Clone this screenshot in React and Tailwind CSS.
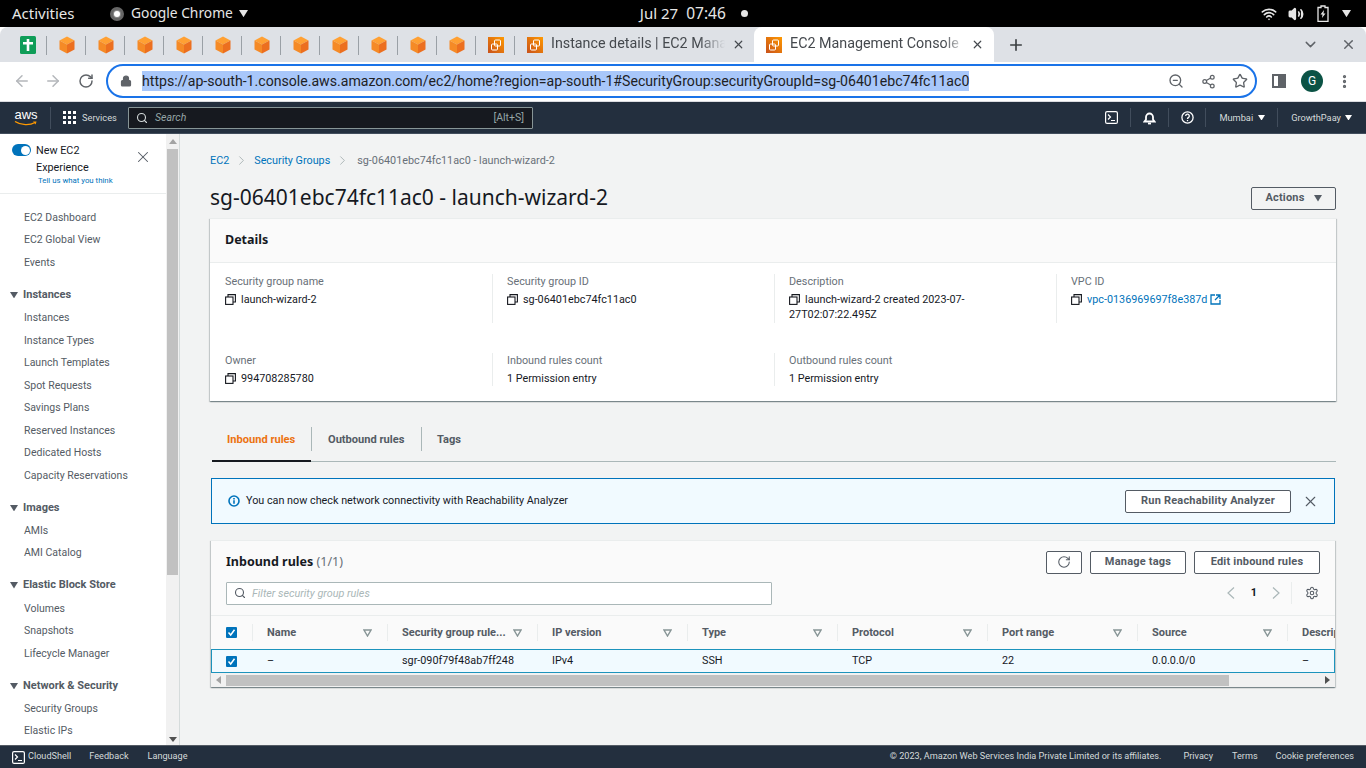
import React from 'react';
import { ArrowLeft, ArrowRight, RotateCw, Lock, ZoomOut, Share2, Star, X, Plus, ChevronDown, ChevronRight, Search, Settings, Wifi, Volume2, EllipsisVertical } from 'lucide-react';

const Cube = () => (
  <svg width="16" height="18" viewBox="0 0 16 18">
    <path d="M8 0.5 15.5 4.5 8 8.5 0.5 4.5Z" fill="#ffa033" />
    <path d="M0.5 4.5 8 8.5V17.5L0.5 13.5Z" fill="#f58a26" />
    <path d="M15.5 4.5 8 8.5V17.5L15.5 13.5Z" fill="#ec6f1f" />
  </svg>
);
const Sheet = () => (
  <svg width="16" height="18" viewBox="0 0 16 18">
    <rect width="16" height="18" rx="1.5" fill="#0f9d58" />
    <path d="M6.7 3h2.6v3h3.7v2.4H9.3V15H6.7V8.4H3V6h3.7Z" fill="#fff" />
  </svg>
);
const Ec2 = () => (
  <svg width="16" height="16" viewBox="0 0 16 16">
    <defs><linearGradient id="e" x1="0" y1="1" x2="1" y2="0"><stop offset="0" stopColor="#c8511b" /><stop offset="1" stopColor="#ff9900" /></linearGradient></defs>
    <rect width="16" height="16" fill="url(#e)" />
    <rect x="6.5" y="3" width="6" height="6" rx="1" fill="none" stroke="#fff" strokeWidth="1" />
    <rect x="3.5" y="7" width="6" height="6" rx="1" fill="none" stroke="#fff" strokeWidth="1" />
  </svg>
);
const CopyIc = () => (
  <svg width="11" height="11" viewBox="0 0 11 11" fill="none" stroke="#16191f" strokeWidth="1.1" className="shrink-0">
    <rect x="0.6" y="3" width="7.4" height="7.4" />
    <path d="M3 3V0.6h7.4V8H8" />
  </svg>
);
const Tri = ({ c = '#fff', s = 8 }) => (
  <svg width={s} height={s * 0.8} viewBox="0 0 10 8" className="shrink-0"><path d="M0 0h10L5 8Z" fill={c} /></svg>
);
const FilterTri = () => (
  <svg width="9" height="8" viewBox="0 0 9 8" fill="none" stroke="#879596" strokeWidth="1.4" className="shrink-0"><path d="M1 1h7L4.5 7Z" /></svg>
);
const Check = () => (
  <span className="w-[11px] h-[11px] bg-[#0073bb] rounded-[1px] flex items-center justify-center shrink-0">
    <svg width="9" height="9" viewBox="0 0 9 9" fill="none" stroke="#fff" strokeWidth="1.5"><path d="M1.5 4.5 3.7 7 7.5 1.8" /></svg>
  </span>
);
const ShellIc = () => (
  <svg width="13" height="13" viewBox="0 0 13 13" fill="none" stroke="#fff" strokeWidth="1.2">
    <rect x="0.6" y="0.6" width="11.8" height="11.8" rx="1.5" />
    <path d="M3 3.5 5.5 6 3 8.5M6 9.5h4" />
  </svg>
);
const Sep = () => <span className="block w-px h-[19px] bg-[#414d5c] shrink-0" />;

const sideGroups = [
  { items: ['EC2 Dashboard', 'EC2 Global View', 'Events'] },
  { h: 'Instances', items: ['Instances', 'Instance Types', 'Launch Templates', 'Spot Requests', 'Savings Plans', 'Reserved Instances', 'Dedicated Hosts', 'Capacity Reservations'] },
  { h: 'Images', items: ['AMIs', 'AMI Catalog'] },
  { h: 'Elastic Block Store', items: ['Volumes', 'Snapshots', 'Lifecycle Manager'] },
  { h: 'Network & Security', items: ['Security Groups', 'Elastic IPs'] },
];

const columns = [
  ['Name', 'w-[135px]', '–'],
  ['Security group rule...', 'w-[150px]', 'sgr-090f79f48ab7ff248'],
  ['IP version', 'w-[150px]', 'IPv4'],
  ['Type', 'w-[150px]', 'SSH'],
  ['Protocol', 'w-[150px]', 'TCP'],
  ['Port range', 'w-[150px]', '22'],
  ['Source', 'w-[150px]', '0.0.0.0/0'],
  ['Description', 'w-[100px]', '–'],
];

const Field = ({ label, first, h, children }) => (
  <div className={`${h} ${first ? 'pl-[15px]' : 'pl-[14px] border-l border-[#eaeded]'}`}>
    <div className="text-[#687078] leading-[14px] pt-px">{label}</div>
    <div className="text-[#16191f] leading-[15px] mt-[3px]">{children}</div>
  </div>
);

const Btn = ({ children, className = '' }) => (
  <div className={`h-[23px] border border-[#545b64] rounded-[2px] bg-white flex items-center justify-center text-[#545b64] font-bold text-[11px] tracking-[0.2px] ${className}`}>{children}</div>
);

export default function App() {
  return (
    <div className="h-screen w-[1366px] overflow-hidden flex flex-col font-['Roboto',sans-serif] text-[10.8px]">
      {/* GNOME bar */}
      <div className="h-[27px] bg-black text-[#e6e6e6] flex items-center text-[15px] font-['Noto_Sans',sans-serif] shrink-0">
        <span className="ml-3 w-[63px] whitespace-nowrap">Activities</span>
        <span className="ml-[35px] w-3.5 h-3.5 rounded-full bg-[#8b8b8b] border-[3px] border-[#666] flex items-center justify-center"><span className="w-1.5 h-1.5 rounded-full bg-white" /></span>
        <span className="ml-[7px] text-[13.8px]">Google Chrome</span>
        <span className="ml-[6px]"><Tri c="#e6e6e6" s={9} /></span>
        <span className="ml-[392px]">Jul 27</span>
        <span className="ml-[8px] text-[15.5px]">07:46</span>
        <span className="ml-[15px] w-[7px] h-[7px] rounded-full bg-[#e6e6e6]" />
        <div className="ml-auto flex items-center mr-[15px]">
          <Wifi size={16} strokeWidth={2.4} />
          <Volume2 size={16} strokeWidth={2.4} fill="#e6e6e6" className="ml-[11px]" />
          <svg width="12" height="17" viewBox="0 0 12 17" className="ml-[13px]" fill="none" stroke="#e6e6e6" strokeWidth="1.3"><path d="M4 1h4v1.5h3v13.8H1V2.5h3Z" /><path d="M7 5 3.5 9.5h2L5 13l3.5-4.5h-2Z" fill="#e6e6e6" stroke="none" /></svg>
          <span className="ml-[13px]"><Tri c="#e6e6e6" s={9} /></span>
        </div>
      </div>

      {/* Tab strip */}
      <div className="h-[35px] bg-[#dee1e6] flex items-center pl-2 shrink-0 text-[#45494e] text-[14.3px] rounded-t-[8px]">
        {[Sheet, ...Array(11).fill(Cube), Ec2].map((I, i) => (
          <div key={i} className="w-[39px] h-full flex items-center justify-center relative">
            <I />
            <span className="absolute right-0 top-[9px] w-px h-[19px] bg-[#9aa0a6]" />
          </div>
        ))}
        <div className="w-[239px] h-full flex items-center pl-3">
          <Ec2 />
          <span className="ml-2 w-[174px] pb-[2px] overflow-hidden whitespace-nowrap [mask-image:linear-gradient(to_right,black_85%,transparent)]">Instance details | EC2 Management</span>
          <X size={13} strokeWidth={2.2} className="ml-[7px]" />
        </div>
        <div className="w-[240px] h-[35px] bg-white rounded-t-[8px] flex items-center pl-3">
          <Ec2 />
          <span className="ml-[8px] w-[175px] pb-[2px] overflow-hidden whitespace-nowrap [mask-image:linear-gradient(to_right,black_88%,transparent)]">EC2 Management Console</span>
          <X size={13} strokeWidth={2.2} className="ml-[6px]" />
        </div>
        <Plus size={18} strokeWidth={2.2} className="ml-[13px] text-[#3c4043]" />
        <ChevronDown size={17} strokeWidth={2} className="ml-auto text-[#5f6368]" />
        <X size={15} strokeWidth={2.2} className="ml-[22px] mr-[10px] text-[#5f6368]" />
      </div>

      {/* Toolbar */}
      <div className="h-[40px] bg-white flex items-center pb-[1px] shrink-0 text-[#5f6368] border-b border-[#dadce0]">
        <ArrowLeft size={18} strokeWidth={2} className="ml-[13px] text-[#b4b7bb]" />
        <ArrowRight size={18} strokeWidth={2} className="ml-[13px] text-[#b4b7bb]" />
        <RotateCw size={16} strokeWidth={2.2} className="ml-[16px]" />
        <div className="ml-[12px] w-[1151px] h-[34px] border-[2.5px] border-[#1a73e8] rounded-full flex items-center">
          <Lock size={12} strokeWidth={2.4} fill="#5f6368" className="ml-3 shrink-0" />
          <span className="ml-[10px] bg-[#a8c7fa] text-[#202124] text-[14.12px] leading-[20px] whitespace-nowrap">https://ap-south-1.console.aws.amazon.com/ec2/home?region=ap-south-1#SecurityGroup:securityGroupId=sg-06401ebc74fc11ac0</span>
          <ZoomOut size={16} strokeWidth={2} className="ml-auto" />
          <Share2 size={15} strokeWidth={2} className="ml-[17px]" />
          <Star size={16} strokeWidth={2} className="ml-[16px] mr-[7px]" />
        </div>
        <span className="ml-[15px] w-[14px] h-[14px] border-2 border-[#5f6368] flex justify-end"><span className="w-[6px] h-full bg-[#5f6368]" /></span>
        <span className="ml-[15px] w-[22px] h-[22px] rounded-full bg-[#0b5345] text-white text-[12px] flex items-center justify-center">G</span>
        <EllipsisVertical size={17} strokeWidth={2.6} className="ml-[13px]" />
      </div>

      {/* AWS nav */}
      <div className="h-[32px] bg-[#232f3e] border-b border-[#414d5c] flex items-center text-[#d5dbdb] text-[9.25px] shrink-0">
        <div className="ml-[14px] w-[24px] flex flex-col items-center text-white">
          <span className="text-[13px] leading-[12px] font-['Liberation_Sans',sans-serif]">aws</span>
          <svg width="24" height="5" viewBox="0 0 24 5" fill="none"><path d="M1 0.5C7 4.5 16 4.5 21 1.5" stroke="#ff9900" strokeWidth="1.3" /><path d="M19 .6 22.5 .4 21.6 3.6" fill="#ff9900" /></svg>
        </div>
        <span className="ml-3 w-px h-[22px] bg-[#414d5c]" />
        <svg width="13" height="13" viewBox="0 0 13 13" fill="#fff" className="ml-[12px]">
          {[0, 5, 10].flatMap((y) => [0, 5, 10].map((x) => <rect key={`${x}${y}`} x={x} y={y} width="3" height="3" />))}
        </svg>
        <span className="ml-[6px] w-[46px]">Services</span>
        <div className="w-[405px] h-[22px] border border-[#879596] rounded-[1px] bg-[#16191f] flex items-center px-[7px]">
          <Search size={12} strokeWidth={2.2} className="text-[#d5dbdb]" />
          <span className="ml-[7px] italic text-[#95a5a6] text-[10.5px]">Search</span>
          <span className="ml-auto text-[#95a5a6] text-[10.5px] mr-px">[Alt+S]</span>
        </div>
        <div className="ml-auto flex items-center">
          <ShellIc />
          <span className="ml-[12px]"><Sep /></span>
          <svg width="13" height="14" viewBox="0 0 13 14" fill="none" stroke="#fff" strokeWidth="1.8" className="ml-[12px]"><path d="M1.5 10.5h10L10 8.5V6a3.5 3.5 0 0 0-7 0v2.5Z" /><path d="M5 12.5h3" /></svg>
          <span className="ml-[12px]"><Sep /></span>
          <svg width="13" height="13" viewBox="0 0 13 13" fill="none" stroke="#fff" strokeWidth="1.3" className="ml-[12px]"><circle cx="6.5" cy="6.5" r="5.6" /><path d="M4.7 5a1.8 1.8 0 1 1 2.6 1.6c-.6.4-.8.7-.8 1.4" /><path d="M6.5 9v1.2" /></svg>
          <span className="ml-[11px]"><Sep /></span>
          <span className="ml-[13px]">Mumbai</span>
          <span className="ml-[5px]"><Tri s={7} /></span>
          <span className="ml-[12px]"><Sep /></span>
          <span className="ml-[13px]">GrowthPaay</span>
          <span className="ml-[4px] mr-[14px]"><Tri s={7} /></span>
        </div>
      </div>

      {/* Main */}
      <div className="flex-1 min-h-0 flex">
        <aside className="w-[166px] shrink-0 bg-white flex flex-col overflow-hidden">
          <div className="h-[60px] border-b border-[#eaeded] pt-[9px] shrink-0">
            <div className="flex">
              <span className="ml-3 mt-[1px] w-[19px] h-[12px] rounded-full bg-[#0073bb] flex items-center justify-end pr-[1.5px]"><span className="w-[9px] h-[9px] rounded-full bg-white" /></span>
              <div className="ml-[5px] text-[#16191f] leading-[16.5px] w-[70px]">New EC2 Experience</div>
              <X size={18} strokeWidth={1.4} className="ml-[28px] mt-[5px] text-[#545b64]" />
            </div>
            <div className="ml-[38px] text-[#0073bb] text-[7.8px] leading-[10px]">Tell us what you think</div>
          </div>
          <nav className="pt-[12.5px] text-[#545b64] text-[10.5px]">
            {sideGroups.map((g, i) => (
              <div key={i}>
                {g.h && (
                  <div className="mt-[10.25px] h-[22.5px] flex items-center pl-[10px] pb-[1px] font-bold text-[11px] gap-[5px]"><Tri c="#545b64" s={8} />{g.h}</div>
                )}
                {g.items.map((t) => <div key={t} className="h-[22.5px] flex items-center pl-[24px]">{t}</div>)}
              </div>
            ))}
          </nav>
        </aside>
        <div className="w-[14px] shrink-0 bg-[#f1f1f1] border-r border-[#d5dbdb] flex flex-col items-center">
          <svg width="8" height="5" viewBox="0 0 8 5" className="mt-[5px] mb-[5px]"><path d="M0 5h8L4 0Z" fill="#a3a3a3" /></svg>
          <div className="w-[11px] h-[426px] bg-[#c1c1c1]" />
          <svg width="8" height="5" viewBox="0 0 8 5" className="mt-auto mb-[3px]"><path d="M0 0h8L4 5Z" fill="#505050" /></svg>
        </div>

        <main className="flex-1 bg-[#f2f3f3] pl-[30px] pr-[30px] min-w-0">
          <div className="h-[47px] pt-[19px] flex items-start text-[#687078] leading-[14px]">
            <span className="text-[#0073bb] pt-px">EC2</span>
            <ChevronRight size={15} strokeWidth={1} className="mx-[5px] text-[#879596]" />
            <span className="text-[#0073bb] pt-px">Security Groups</span>
            <ChevronRight size={15} strokeWidth={1} className="ml-[5px] mr-[7px] text-[#879596]" />
            <span className="pt-px">sg-06401ebc74fc11ac0 - launch-wizard-2</span>
          </div>
          <div className="h-[32px] flex items-center justify-between">
            <h1 className="text-[21px] text-[#16191f] leading-[26px] font-['Noto_Sans',sans-serif]">sg-06401ebc74fc11ac0 - launch-wizard-2</h1>
            <Btn className="w-[85px] gap-[9px] !bg-transparent mt-[3px]"><span>Actions</span><Tri c="#545b64" s={8} /></Btn>
          </div>

          {/* Details */}
          <section className="mt-[5px] h-[183px] bg-white border-t border-[#eaeded] shadow-[0_1px_1px_0_rgba(0,28,36,0.3),1px_1px_1px_0_rgba(0,28,36,0.15),-1px_1px_1px_0_rgba(0,28,36,0.15)]">
            <div className="h-[44px] bg-[#fafafa] border-b border-[#eaeded] pl-[15px] pb-px flex items-center text-[#16191f] font-bold text-[12.5px] font-['Noto_Sans',sans-serif]">Details</div>
            <div className="mt-[11px] grid grid-cols-[282px_282px_282px_280px] gap-y-[30px]">
              <Field first h="h-[49px]" label="Security group name"><span className="flex items-center gap-[5px]"><CopyIc />launch-wizard-2</span></Field>
              <Field h="h-[49px]" label="Security group ID"><span className="flex items-center gap-[5px]"><CopyIc />sg-06401ebc74fc11ac0</span></Field>
              <Field h="h-[49px]" label="Description">
                <span className="flex items-center gap-[5px]"><CopyIc />launch-wizard-2 created 2023-07-</span>
                <span>27T02:07:22.495Z</span>
              </Field>
              <Field h="h-[49px]" label="VPC ID">
                <span className="flex items-center gap-[5px]"><CopyIc /><span className="text-[#0073bb]">vpc-0136969697f8e387d</span>
                  <svg width="11" height="11" viewBox="0 0 11 11" fill="none" stroke="#0073bb" strokeWidth="1.3" className="-ml-[2px]"><path d="M5 1H1v9h9V6M6 1h4v4M10 1 5 6" /></svg>
                </span>
              </Field>
              <Field first h="h-[33px]" label="Owner"><span className="flex items-center gap-[5px]"><CopyIc />994708285780</span></Field>
              <Field h="h-[33px]" label="Inbound rules count">1 Permission entry</Field>
              <Field h="h-[33px]" label="Outbound rules count">1 Permission entry</Field>
            </div>
          </section>

          {/* Tabs */}
          <div className="mt-[16px] ml-[2px] h-[45px] border-b border-[#aab7b8] flex font-bold text-[11.1px] text-[#545b64]">
            <div className="w-[99px] h-[45px] border-b-2 border-[#16191f] flex items-start pt-[16px] pl-[15px] text-[#ec7211] leading-[14px]">Inbound rules</div>
            <div className="mt-[10px] h-[24px] w-[110px] border-l border-[#aab7b8] pl-4 pt-[2px] flex items-center">Outbound rules</div>
            <div className="mt-[10px] h-[24px] border-l border-[#aab7b8] pl-[15px] pt-[2px] flex items-center">Tags</div>
          </div>

          {/* Alert */}
          <div className="mt-[16px] mx-px h-[46px] border border-[#0073bb] bg-[#f1faff] flex items-center pl-4 pr-[16px] text-[#16191f]">
            <svg width="12" height="12" viewBox="0 0 12 12" fill="none" className="shrink-0"><circle cx="6" cy="6" r="5" stroke="#0073bb" strokeWidth="1.6" /><path d="M6 3v1.4M6 5.3v3.4" stroke="#0073bb" strokeWidth="1.6" /></svg>
            <span className="ml-[6px]">You can now check network connectivity with Reachability Analyzer</span>
            <Btn className="ml-auto w-[166px]">Run Reachability Analyzer</Btn>
            <X size={17} strokeWidth={1.5} className="ml-[11px] -mr-px text-[#545b64]" />
          </div>

          {/* Table card */}
          <section className="mt-[16px] h-[147px] bg-[#fafafa] border-t border-[#eaeded] shadow-[0_1px_1px_0_rgba(0,28,36,0.3),1px_1px_1px_0_rgba(0,28,36,0.15),-1px_1px_1px_0_rgba(0,28,36,0.15)] flex flex-col overflow-hidden mx-px">
            <div className="h-[75px] shrink-0 pl-[15px] pr-[15px] pt-[9px] border-b border-[#eaeded]">
              <div className="flex items-center h-[24px]">
                <span className="font-bold text-[12.5px] text-[#16191f] font-['Noto_Sans',sans-serif]">Inbound rules <span className="font-normal text-[#687078]">(1/1)</span></span>
                <Btn className="ml-auto w-[36px]"><RotateCw size={14} strokeWidth={1.8} /></Btn>
                <Btn className="ml-[8px] w-[96px]">Manage tags</Btn>
                <Btn className="ml-[8px] w-[126px]">Edit inbound rules</Btn>
              </div>
              <div className="flex items-center mt-[7px] h-[24px]">
                <div className="w-[546px] h-[23px] border border-[#aab7b8] rounded-[1px] bg-white flex items-center pl-[7px]">
                  <Search size={12} strokeWidth={2.2} className="text-[#545b64]" />
                  <span className="ml-[6px] pt-[2px] italic text-[#aab7b8]">Filter security group rules</span>
                </div>
                <svg width="8" height="12" viewBox="0 0 8 12" fill="none" stroke="#aab7b8" strokeWidth="1.2" className="ml-auto"><path d="M7 .5 1 6l6 5.5" /></svg>
                <span className="ml-[16px] font-bold text-[#16191f]">1</span>
                <svg width="8" height="12" viewBox="0 0 8 12" fill="none" stroke="#aab7b8" strokeWidth="1.2" className="ml-[15px]"><path d="M1 .5 7 6l-6 5.5" /></svg>
                <span className="ml-[11px] w-px h-[22px] bg-[#eaeded]" />
                <Settings size={14} strokeWidth={1.8} className="ml-[13px] mr-px text-[#545b64]" />
              </div>
            </div>
            <div className="h-[33px] shrink-0 flex items-center font-bold text-[11px] text-[#545b64] overflow-hidden">
              <div className="w-[41px] shrink-0 pl-[15px]"><Check /></div>
              {columns.map(([h, w], i) => (
                <div key={h} className={`${w} shrink-0 h-[17px] border-l border-[#eaeded] flex items-center pl-[14px] pr-[15px] whitespace-nowrap`}>
                  <span className={`pt-[2px] ${i < 7 ? 'flex-1' : ''}`}>{h}</span>
                  {i < 7 && <FilterTri />}
                </div>
              ))}
            </div>
            <div className="h-[24px] shrink-0 flex items-center bg-[#f1faff] border border-[#1c93bc] text-[#16191f] overflow-hidden">
              <div className="w-[41px] shrink-0 pl-[14px]"><Check /></div>
              {columns.map(([h, w, v]) => (
                <div key={h} className={`${w} shrink-0 pl-[14px] whitespace-nowrap`}>{v}</div>
              ))}
            </div>
            <div className="h-[14px] shrink-0 bg-[#f1f1f1] flex items-center">
              <svg width="5" height="8" viewBox="0 0 5 8" className="ml-[5px]"><path d="M5 0v8L0 4Z" fill="#a3a3a3" /></svg>
              <div className="ml-[5px] w-[1003px] h-[11px] bg-[#c1c1c1]" />
              <svg width="5" height="8" viewBox="0 0 5 8" className="ml-auto mr-[5px]"><path d="M0 0v8l5-4Z" fill="#505050" /></svg>
            </div>
          </section>
        </main>
      </div>

      {/* Footer */}
      <footer className="h-[23px] bg-[#232f3e] border-t border-[#545b64] flex items-center text-[#d5dbdb] text-[9.15px] shrink-0">
        <span className="ml-3"><ShellIc /></span>
        <span className="ml-[3px]">CloudShell</span>
        <span className="ml-[18px]">Feedback</span>
        <span className="ml-[19px]">Language</span>
        <span className="ml-auto">© 2023, Amazon Web Services India Private Limited or its affiliates.</span>
        <span className="ml-[22px]">Privacy</span>
        <span className="ml-[19px]">Terms</span>
        <span className="ml-[18px] mr-[12px]">Cookie preferences</span>
      </footer>
    </div>
  );
}
